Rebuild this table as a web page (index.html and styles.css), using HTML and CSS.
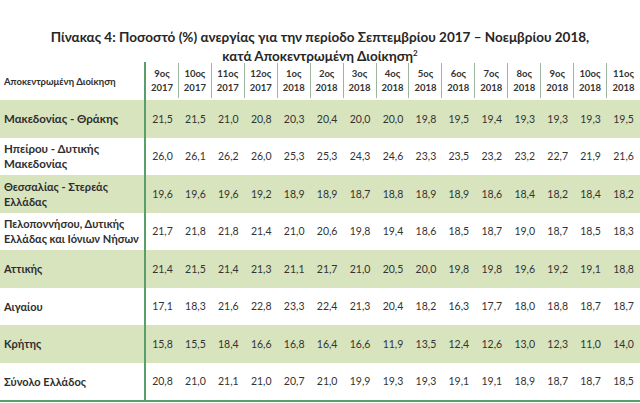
FILE: index.html
```html
<!DOCTYPE html>
<html lang="el">
<head>
<meta charset="utf-8">
<title>Πίνακας 4</title>
<link rel="stylesheet" href="styles.css">
</head>
<body>
<div class="page">
  <h1 class="title">Πίνακας 4: Ποσοστό (%) ανεργίας για την περίοδο Σεπτεμβρίου 2017 – Νοεμβρίου 2018,<br>κατά Αποκεντρωμένη Διοίκηση<sup>2</sup></h1>
  <div class="table">
    <div class="row head">
      <div class="label">Αποκεντρωμένη Διοίκηση</div>
      <div class="h">9ος<br>2017</div>
      <div class="h">10ος<br>2017</div>
      <div class="h">11ος<br>2017</div>
      <div class="h">12ος<br>2017</div>
      <div class="h">1ος<br>2018</div>
      <div class="h">2ος<br>2018</div>
      <div class="h">3ος<br>2018</div>
      <div class="h">4ος<br>2018</div>
      <div class="h">5ος<br>2018</div>
      <div class="h">6ος<br>2018</div>
      <div class="h">7ος<br>2018</div>
      <div class="h">8ος<br>2018</div>
      <div class="h">9ος<br>2018</div>
      <div class="h">10ος<br>2018</div>
      <div class="h">11ος<br>2018</div>
    </div>
    <div class="row shade">
      <div class="label big">Μακεδονίας - Θράκης</div>
      <div class="v">21,5</div><div class="v">21,5</div><div class="v">21,0</div><div class="v">20,8</div><div class="v">20,3</div><div class="v">20,4</div><div class="v">20,0</div><div class="v">20,0</div><div class="v">19,8</div><div class="v">19,5</div><div class="v">19,4</div><div class="v">19,3</div><div class="v">19,3</div><div class="v">19,3</div><div class="v">19,5</div>
    </div>
    <div class="row">
      <div class="label big">Ηπείρου - Δυτικής<br>Μακεδονίας</div>
      <div class="v">26,0</div><div class="v">26,1</div><div class="v">26,2</div><div class="v">26,0</div><div class="v">25,3</div><div class="v">25,3</div><div class="v">24,3</div><div class="v">24,6</div><div class="v">23,3</div><div class="v">23,5</div><div class="v">23,2</div><div class="v">23,2</div><div class="v">22,7</div><div class="v">21,9</div><div class="v">21,6</div>
    </div>
    <div class="row shade">
      <div class="label">Θεσσαλίας - Στερεάς<br>Ελλάδας</div>
      <div class="v">19,6</div><div class="v">19,6</div><div class="v">19,6</div><div class="v">19,2</div><div class="v">18,9</div><div class="v">18,9</div><div class="v">18,7</div><div class="v">18,8</div><div class="v">18,9</div><div class="v">18,9</div><div class="v">18,6</div><div class="v">18,4</div><div class="v">18,2</div><div class="v">18,4</div><div class="v">18,2</div>
    </div>
    <div class="row">
      <div class="label">Πελοποννήσου, Δυτικής<br>Ελλάδας και Ιόνιων Νήσων</div>
      <div class="v">21,7</div><div class="v">21,8</div><div class="v">21,8</div><div class="v">21,4</div><div class="v">21,0</div><div class="v">20,6</div><div class="v">19,8</div><div class="v">19,4</div><div class="v">18,6</div><div class="v">18,5</div><div class="v">18,7</div><div class="v">19,0</div><div class="v">18,7</div><div class="v">18,5</div><div class="v">18,3</div>
    </div>
    <div class="row shade">
      <div class="label">Αττικής</div>
      <div class="v">21,4</div><div class="v">21,5</div><div class="v">21,4</div><div class="v">21,3</div><div class="v">21,1</div><div class="v">21,7</div><div class="v">21,0</div><div class="v">20,5</div><div class="v">20,0</div><div class="v">19,8</div><div class="v">19,8</div><div class="v">19,6</div><div class="v">19,2</div><div class="v">19,1</div><div class="v">18,8</div>
    </div>
    <div class="row">
      <div class="label">Αιγαίου</div>
      <div class="v">17,1</div><div class="v">18,3</div><div class="v">21,6</div><div class="v">22,8</div><div class="v">23,3</div><div class="v">22,4</div><div class="v">21,3</div><div class="v">20,4</div><div class="v">18,2</div><div class="v">16,3</div><div class="v">17,7</div><div class="v">18,0</div><div class="v">18,8</div><div class="v">18,7</div><div class="v">18,7</div>
    </div>
    <div class="row shade">
      <div class="label">Κρήτης</div>
      <div class="v">15,8</div><div class="v">15,5</div><div class="v">18,4</div><div class="v">16,6</div><div class="v">16,8</div><div class="v">16,4</div><div class="v">16,6</div><div class="v">11,9</div><div class="v">13,5</div><div class="v">12,4</div><div class="v">12,6</div><div class="v">13,0</div><div class="v">12,3</div><div class="v">11,0</div><div class="v">14,0</div>
    </div>
    <div class="row last">
      <div class="label">Σύνολο Ελλάδος</div>
      <div class="v">20,8</div><div class="v">21,0</div><div class="v">21,1</div><div class="v">21,0</div><div class="v">20,7</div><div class="v">21,0</div><div class="v">19,9</div><div class="v">19,3</div><div class="v">19,3</div><div class="v">19,1</div><div class="v">19,1</div><div class="v">18,9</div><div class="v">18,7</div><div class="v">18,7</div><div class="v">18,5</div>
    </div>
  </div>
</div>
</body>
</html>
```

FILE: styles.css
```css
html, body {
  margin: 0;
  padding: 0;
  background: #ffffff;
}
.page {
  width: 640px;
  height: 403px;
  overflow: hidden;
  font-family: Lato, "Open Sans", sans-serif;
  color: #333333;
}
.title {
  margin: 0 0 -4px 0;
  padding-top: 28px;
  font-size: 13.5px;
  line-height: 19px;
  font-weight: 700;
  text-align: center;
  color: #262626;
}
.title sup {
  font-size: 8px;
  line-height: 0;
}
.table {
  display: flex;
  flex-direction: column;
  border-bottom: 2px solid #5a9e6a;
}
.row {
  display: grid;
  grid-template-columns: 146px repeat(15, 1fr);
  height: 37.5px;
  align-items: center;
}
.row.shade {
  background: #d8e4be;
}
.row.head {
  height: 38px;
}
.label {
  align-self: stretch;
  display: flex;
  align-items: center;
  padding-left: 4px;
  border-right: 2px solid #5a9e6a;
  font-weight: 700;
  font-size: 11px;
  line-height: 15px;
  color: #2e2e2e;
}
.head .label {
  font-size: 9.5px;
}
.label.big {
  font-size: 11.5px;
}
.h {
  align-self: start;
  margin-top: 1px;
  height: 35px;
  display: flex;
  align-items: center;
  justify-content: center;
  text-align: center;
  border-right: 1px solid #9bb59f;
  font-weight: 700;
  font-size: 9.5px;
  line-height: 14px;
  color: #333333;
}
.h:last-child {
  border-right: none;
}
.v {
  text-align: center;
  font-size: 10.5px;
  color: #333333;
}
```
